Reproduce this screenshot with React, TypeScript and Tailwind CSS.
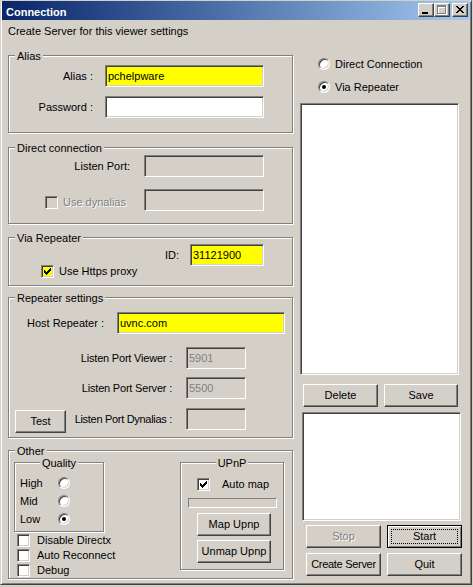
import React from 'react';
import clsx from 'clsx';

const sunken =
  'border border-t-[#808080] border-l-[#808080] border-r-white border-b-white shadow-[inset_1px_1px_0_#404040,inset_-1px_-1px_0_#d4d0c8]';
const raised =
  'border border-t-white border-l-white border-r-[#404040] border-b-[#404040] shadow-[inset_-1px_-1px_0_#808080]';
const grayText = 'text-[#808080] [text-shadow:1px_1px_0_#fff]';

const CHECK: [number, number, number][] = [
  [6, 0, 1], [5, 1, 2], [0, 2, 1], [4, 2, 3], [0, 3, 2], [3, 3, 3], [0, 4, 5], [1, 5, 3], [2, 6, 1],
];

const CLOSE: [number, number, number][] = [
  [0, 0, 2], [6, 0, 2], [1, 1, 2], [5, 1, 2], [2, 2, 4], [3, 3, 2], [2, 4, 4], [1, 5, 2], [5, 5, 2], [0, 6, 2], [6, 6, 2],
];

const Group = ({
  title,
  center,
  className,
  children,
}: {
  title: string;
  center?: boolean;
  className?: string;
  children?: React.ReactNode;
}) => (
  <div
    className={clsx(
      'flex flex-col border border-[#808080] shadow-[inset_1px_1px_0_#fff,1px_1px_0_#fff]',
      className,
    )}
  >
    <span
      className={clsx(
        '-mt-[6px] px-[2px] bg-[#d4d0c8] leading-[13px]',
        center ? 'self-center' : 'self-start ml-[6px]',
      )}
    >
      {title}
    </span>
    {children}
  </div>
);

const Edit = ({
  value,
  className,
  tone = 'white',
}: {
  value?: string;
  className?: string;
  tone?: 'white' | 'yellow' | 'off';
}) => (
  <div
    className={clsx(
      'flex items-center h-[22px] pl-[2px] shrink-0',
      sunken,
      tone === 'white' && 'bg-white',
      tone === 'yellow' && 'bg-[#ffff00]',
      tone === 'off' && 'bg-[#d4d0c8] text-[#808080]',
      className,
    )}
  >
    {value}
  </div>
);

const Check = ({ checked, tone = 'white' }: { checked?: boolean; tone?: 'white' | 'yellow' | 'off' }) => (
  <div
    className={clsx(
      'w-[13px] h-[13px] shrink-0 flex items-center justify-center',
      sunken,
      tone === 'white' && 'bg-white',
      tone === 'yellow' && 'bg-[#ffff00]',
      tone === 'off' && 'bg-[#d4d0c8]',
    )}
  >
    {checked && (
      <svg width="7" height="7" viewBox="0 0 7 7" shapeRendering="crispEdges">
        {CHECK.map(([x, y, w], i) => (
          <rect key={i} x={x} y={y} width={w} height={1} fill="#000" />
        ))}
      </svg>
    )}
  </div>
);

const Radio = ({ checked, className }: { checked?: boolean; className?: string }) => (
  <div
    className={clsx(
      'w-[12px] h-[12px] shrink-0 rounded-full bg-white flex items-center justify-center',
      sunken,
      className,
    )}
  >
    {checked && <div className="w-[4px] h-[4px] rounded-full bg-black" />}
  </div>
);

const Btn = ({
  children,
  className,
  disabled,
  isDefault,
}: {
  children: React.ReactNode;
  className?: string;
  disabled?: boolean;
  isDefault?: boolean;
}) => (
  <button
    type="button"
    className={clsx(
      'h-[23px] shrink-0 flex items-center justify-center bg-[#d4d0c8] leading-[13px]',
      isDefault
        ? 'border border-black shadow-[inset_1px_1px_0_#fff,inset_-1px_-1px_0_#808080] p-[3px]'
        : raised,
      disabled && grayText,
      className,
    )}
  >
    {isDefault ? (
      <span className="w-full h-full flex items-center justify-center border border-dotted border-black">
        {children}
      </span>
    ) : (
      children
    )}
  </button>
);

const CaptionBtn = ({ children, className }: { children: React.ReactNode; className?: string }) => (
  <div className={clsx('w-[16px] h-[14px] bg-[#d4d0c8]', raised, className)}>{children}</div>
);

const Row = ({ className, children }: { className?: string; children: React.ReactNode }) => (
  <div className={clsx('flex items-center', className)}>{children}</div>
);

const CheckRow = ({ label, className }: { label: string; className?: string }) => (
  <div className={clsx('flex items-center h-[13px] ml-[3px]', className)}>
    <Check />
    <span className="ml-[7px] whitespace-nowrap">{label}</span>
  </div>
);

const QualityRow = ({ label, checked }: { label: string; checked?: boolean }) => (
  <div className="flex items-center h-[18px] pl-[5px]">
    <span className="w-[38px]">{label}</span>
    <Radio checked={checked} />
  </div>
);

export default function App() {
  return (
    <div className="w-[473px] h-[587px] bg-[#d4d0c8] font-['Liberation_Sans',Arial,sans-serif] text-[11px] leading-[13px] text-black">
      <div className="w-[472px] h-[585px] flex flex-col pl-px border border-l-[#d4d0c8] border-t-[#d4d0c8] border-r-[#404040] border-b-[#404040] shadow-[inset_1px_1px_0_#fff,inset_-1px_-1px_0_#808080]">
        {/* title bar */}
        <div className="h-[19px] w-[468px] shrink-0 flex bg-linear-to-r from-[#0a246a] to-[#a6caf0]">
          <span className="pl-[4px] pt-[5px] font-bold text-white">Connection</span>
          <div className="ml-auto mt-[2px] mr-[2px] flex">
            <CaptionBtn>
              <svg width="14" height="12" viewBox="0 0 14 12" shapeRendering="crispEdges">
                <rect x="3" y="8" width="6" height="2" fill="#000" />
              </svg>
            </CaptionBtn>
            <CaptionBtn>
              <svg width="14" height="12" viewBox="0 0 14 12" shapeRendering="crispEdges">
                <g fill="none" stroke="#fff" transform="translate(1 1)">
                  <rect x="2.5" y="1.5" width="8" height="8" />
                  <line x1="2" y1="2.5" x2="11" y2="2.5" />
                </g>
                <g fill="none" stroke="#808080">
                  <rect x="2.5" y="1.5" width="8" height="8" />
                  <line x1="2" y1="2.5" x2="11" y2="2.5" />
                </g>
              </svg>
            </CaptionBtn>
            <CaptionBtn className="ml-[2px]">
              <svg width="14" height="12" viewBox="0 0 14 12" shapeRendering="crispEdges">
                {CLOSE.map(([x, y, w], i) => (
                  <rect key={i} x={x + 3} y={y + 2} width={w} height={1} fill="#000" />
                ))}
              </svg>
            </CaptionBtn>
          </div>
        </div>

        <div className="mt-[5px] ml-[6px]">Create Server for this viewer settings</div>

        <div className="flex items-start mt-[17px]">
          {/* left column */}
          <div className="ml-[6px] w-[285px] flex flex-col">
            <Group title="Alias" className="h-[78px]">
              <Row className="mt-[2px]">
                <span className="w-[84px] text-right">Alias :</span>
                <Edit className="ml-[12px] w-[159px]" tone="yellow" value="pchelpware" />
              </Row>
              <Row className="mt-[9px]">
                <span className="w-[84px] text-right">Password :</span>
                <Edit className="ml-[12px] w-[159px]" />
              </Row>
            </Group>

            <Group title="Direct connection" className="mt-[14px] h-[77px]">
              <Row>
                <span className="w-[121px] text-right">Listen Port:</span>
                <Edit className="ml-[14px] w-[120px]" tone="off" />
              </Row>
              <div className="flex items-start mt-[12px]">
                <div className="w-[135px] flex items-center mt-[7px]">
                  <div className="ml-[36px]">
                    <Check tone="off" />
                  </div>
                  <span className={clsx('ml-[5px]', grayText)}>Use dynalias</span>
                </div>
                <Edit className="w-[120px]" tone="off" />
              </div>
            </Group>

            <Group title="Via Repeater" className="mt-[13px] h-[49px]">
              <Row className="-mt-px">
                <span className="w-[170px] text-right">ID:</span>
                <Edit className="ml-[11px] w-[74px]" tone="yellow" value="31121900" />
              </Row>
              <Row className="-mt-px ml-[32px]">
                <Check checked tone="yellow" />
                <span className="ml-[5px]">Use Https proxy</span>
              </Row>
            </Group>

            <Group title="Repeater settings" className="mt-[11px] h-[141px]">
              <Row className="mt-[7px]">
                <span className="w-[95px] text-right">Host Repeater :</span>
                <Edit className="ml-[13px] w-[168px]" tone="yellow" value="uvnc.com" />
              </Row>
              <Row className="mt-[13px]">
                <span className="w-[163px] text-right tracking-[-0.2px]">Listen Port Viewer :</span>
                <Edit className="ml-[14px] w-[60px]" tone="off" value="5901" />
              </Row>
              <Row className="mt-[8px]">
                <span className="w-[163px] text-right tracking-[-0.2px]">Listen Port Server :</span>
                <Edit className="ml-[14px] w-[60px]" tone="off" value="5500" />
              </Row>
              <div className="flex items-start mt-[9px]">
                <div className="w-[163px] h-[22px] flex">
                  <Btn className="ml-[6px] mt-[2px] w-[51px]">Test</Btn>
                  <span className="ml-auto self-center tracking-[-0.3px]">Listen Port Dynalias :</span>
                </div>
                <Edit className="ml-[14px] w-[60px]" tone="off" />
              </div>
            </Group>

            <Group title="Other" className="mt-[12px] h-[129px]">
              <div className="flex items-start mt-[4px]">
                <div className="ml-[5px] w-[90px] flex flex-col">
                  <Group title="Quality" center className="h-[70px]">
                    <div className="mt-[4px]">
                      <QualityRow label="High" />
                      <QualityRow label="Mid" />
                      <QualityRow label="Low" checked />
                    </div>
                  </Group>
                  <CheckRow label="Disable Directx" className="mt-[2px]" />
                  <CheckRow label="Auto Reconnect" className="mt-[2px]" />
                  <CheckRow label="Debug" className="mt-[2px]" />
                </div>
                <Group title="UPnP" center className="ml-[76px] w-[104px] h-[108px]">
                  <Row className="mt-[8px] ml-[16px]">
                    <Check checked />
                    <span className="ml-[12px]">Auto map</span>
                  </Row>
                  <div className="ml-[7px] mt-[7px] w-[89px] h-[10px] border border-t-[#808080] border-l-[#808080] border-r-white border-b-white" />
                  <Btn className="ml-[16px] mt-[5px] w-[74px]">Map Upnp</Btn>
                  <Btn className="ml-[16px] mt-[4px] w-[74px]">Unmap Upnp</Btn>
                </Group>
              </div>
            </Group>
          </div>

          {/* right column */}
          <div className="ml-[7px] w-[162px] flex flex-col">
            <Row className="mt-[3px] h-[12px]">
              <Radio className="ml-[18px]" />
              <span className="ml-[5px]">Direct Connection</span>
            </Row>
            <Row className="mt-[11px] h-[12px]">
              <Radio className="ml-[18px]" checked />
              <span className="ml-[5px]">Via Repeater</span>
            </Row>
            <div className={clsx('mt-[10px] w-[159px] h-[272px] bg-white', sunken)} />
            <div className="flex mt-[9px]">
              <Btn className="ml-[3px] w-[75px]">Delete</Btn>
              <Btn className="ml-[6px] w-[74px]">Save</Btn>
            </div>
            <div className={clsx('mt-[5px] ml-[2px] w-[159px] h-[109px] bg-white', sunken)} />
            <div className="flex mt-[4px]">
              <Btn className="ml-[6px] w-[75px]" disabled>
                Stop
              </Btn>
              <Btn className="ml-[6px] w-[75px]" isDefault>
                Start
              </Btn>
            </div>
            <div className="flex mt-[5px]">
              <Btn className="ml-[6px] w-[75px] whitespace-nowrap tracking-[-0.3px]">Create Server</Btn>
              <Btn className="ml-[6px] w-[75px]">Quit</Btn>
            </div>
          </div>
        </div>
      </div>
    </div>
  );
}
